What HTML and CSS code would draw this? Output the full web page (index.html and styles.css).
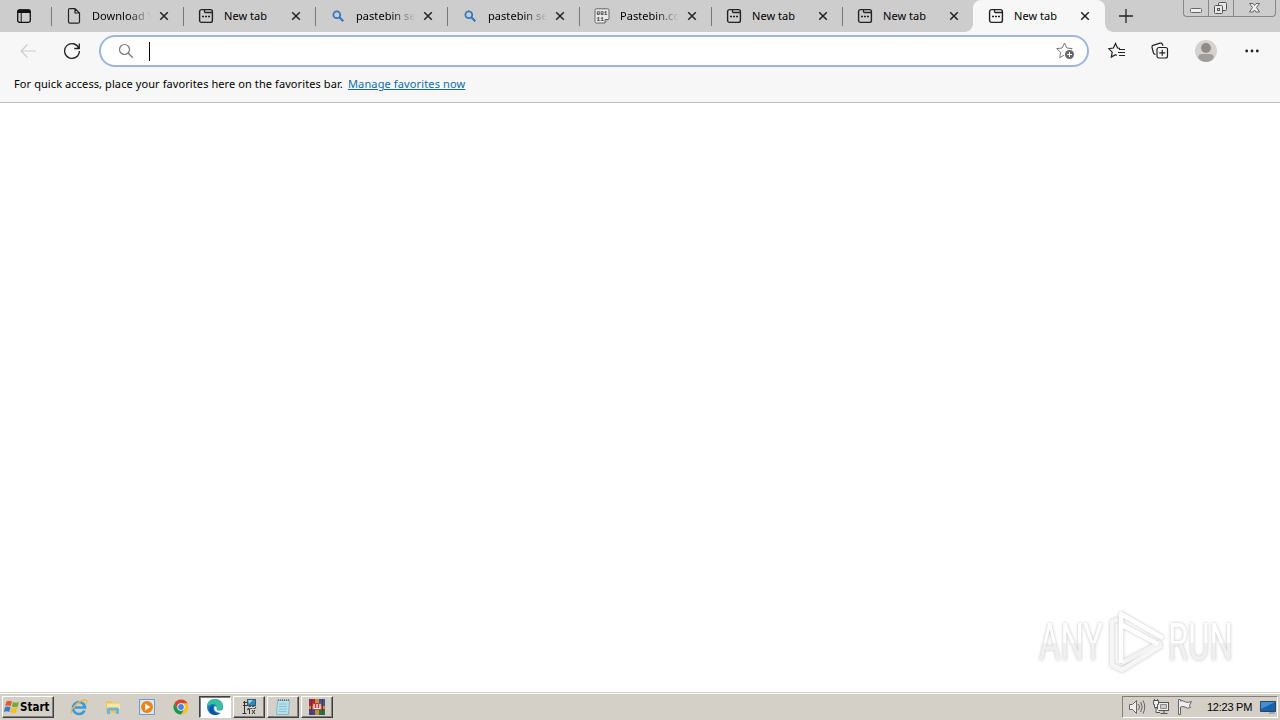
FILE: index.html
```
<!DOCTYPE html>
<html lang="en">
  <head>
    <meta charset="UTF-8" />
    <title>New tab</title>
    <link rel="stylesheet" href="styles.css" />
  </head>
  <body>
    <svg class="sprite">
      <symbol id="newtab" viewBox="0 0 16 16">
        <rect x="1.6" y="1.6" width="12.8" height="12.8" rx="2" fill="none" stroke="#222" stroke-width="1.4" />
        <path d="M6.5 2v1.2q0 1.3 1.3 1.3H14" fill="none" stroke="#222" stroke-width="1.3" />
        <path d="M4 8.500h2M7 8.500h2M10 8.500h2" stroke="#222" stroke-width="1.600" />
      </symbol>
      <symbol id="page" viewBox="0 0 16 16">
        <path d="M2.500 1.900q0-1.300 1.300-1.300H9L13.500 5v8.700q0 1.500-1.500 1.500H4q-1.500 0-1.500-1.500zM9 .8V5h4.300" fill="none" stroke="#222" stroke-width="1.200" />
      </symbol>
      <symbol id="search" viewBox="0 0 16 16">
        <circle cx="6.800" cy="6.800" r="3.400" fill="none" stroke="#3478bd" stroke-width="1.800" />
        <path d="M9.300 9.300l4 4" stroke="#3478bd" stroke-width="2.200" />
      </symbol>
      <symbol id="close" viewBox="0 0 10 10">
        <path d="M1.200 1.200l7.600 7.600M8.800 1.200L1.200 8.800" stroke="#222" stroke-width="1.500" />
      </symbol>
    </svg>

    <header class="tabstrip">
      <div class="tab-actions">
        <svg width="16" height="16" viewBox="0 0 16 16">
          <rect x="1.700" y="2" width="12.600" height="12.300" rx="1.800" fill="none" stroke="#111" stroke-width="1.300" />
          <path d="M1.500 3q0-1.500 1.500-1.500h10q1.500 0 1.500 1.500v2h-13z" fill="#111" />
          <path d="M5.200 5v9" stroke="#111" />
        </svg>
      </div>
      <div class="tab"><svg class="favicon"><use href="#page" /></svg><span class="title fade">Download V</span><svg class="close"><use href="#close" /></svg></div>
      <div class="tab"><svg class="favicon"><use href="#newtab" /></svg><span class="title">New tab</span><svg class="close"><use href="#close" /></svg></div>
      <div class="tab"><svg class="favicon"><use href="#search" /></svg><span class="title fade">pastebin se</span><svg class="close"><use href="#close" /></svg></div>
      <div class="tab"><svg class="favicon"><use href="#search" /></svg><span class="title fade">pastebin se</span><svg class="close"><use href="#close" /></svg></div>
      <div class="tab">
        <svg class="favicon paste" viewBox="0 0 16 16">
          <path d="M2.500.8h11q1.500 0 1.500 1.500v8.700L10.800 15H2.500Q1 15 1 13.500V2.300Q1 .8 2.500.8z" fill="#e8e8e8" stroke="#666" />
          <path d="M11 15v-3.500h4" fill="#bbb" stroke="#666" />
          <text x="2.600" y="7" font-size="6">001</text>
          <text x="2.600" y="13" font-size="6">11</text>
        </svg><span class="title fade">Pastebin.co</span><svg class="close"><use href="#close" /></svg>
      </div>
      <div class="tab narrow"><svg class="favicon"><use href="#newtab" /></svg><span class="title">New tab</span><svg class="close"><use href="#close" /></svg></div>
      <div class="tab narrow"><svg class="favicon"><use href="#newtab" /></svg><span class="title">New tab</span><svg class="close"><use href="#close" /></svg></div>
      <div class="tab active"><svg class="favicon"><use href="#newtab" /></svg><span class="title">New tab</span><svg class="close"><use href="#close" /></svg></div>
      <svg class="add-tab" width="14" height="14" viewBox="0 0 14 14"><path d="M7 0v14M0 7h14" stroke="#222" stroke-width="1.300" /></svg>
      <div class="window-buttons">
        <div><svg width="24" height="16"><rect x="6.500" y="8.500" width="11" height="4" rx="1" fill="#eee" stroke="#666" /></svg></div>
        <div><svg width="24" height="16" fill="#e8e8e8" stroke="#555"><rect x="9.500" y="2.500" width="8" height="8" rx="1" /><rect x="5.500" y="5.500" width="8" height="8" rx="1" /><rect x="8.500" y="8.500" width="2" height="2" /></svg></div>
        <div><svg width="40" height="16"><path d="M15.500 3.500h3.500l1.500 2 1.500-2h3.500l-3 4 3 4.500H22l-1.500-2-1.500 2h-3.500l3-4.500z" fill="#eee" stroke="#666" /></svg></div>
      </div>
    </header>

    <div class="toolbar">
      <svg class="back" width="18" height="16" viewBox="0 0 18 16"><path d="M17 8H2M8.500 1.500L2 8l6.500 6.500" fill="none" stroke="#ccc" stroke-width="1.200" /></svg>
      <svg class="reload" width="18" height="18" viewBox="0 0 18 18"><path d="M15.900 6.300A7.400 7.400 0 1 0 16.400 9M16.300 1.500v5h-5" fill="none" stroke="#222" stroke-width="1.300" /></svg>
      <div class="address">
        <svg width="16" height="16" viewBox="0 0 16 16"><circle cx="6.500" cy="6.500" r="5" fill="none" stroke="#777" stroke-width="1.200" /><path d="M10.200 10.200l4.600 4.600" stroke="#777" stroke-width="1.300" /></svg>
        <span class="caret"></span>
        <svg class="add-favorite" width="20" height="18" viewBox="0 0 20 18">
          <path d="M8.500 1l2.300 5 5.400.6-4 3.700 1 5.400-4.700-2.700L3.700 15.700l1-5.400-4-3.700 5.400-.6z" fill="none" stroke="#777" />
          <circle cx="13.500" cy="12.500" r="5.500" fill="#fff" /><circle cx="13.500" cy="12.500" r="4.500" fill="#666" />
          <path d="M13.500 10v5M11 12.500h5" stroke="#fff" />
        </svg>
      </div>
      <svg class="favorites" width="18" height="18" viewBox="0 0 18 18"><path d="M12 6.300l-2.500-.3L7.500 1.500 5.400 6l-4.700.7 3.500 3.400-.9 5 4.200-2.300 1.300.7M11 7.500h6M10 10.500h7M11 13.500h6" fill="none" stroke="#222" stroke-width="1.200" /></svg>
      <svg class="collections" width="18" height="18" viewBox="0 0 18 18" fill="none" stroke="#222" stroke-width="1.200"><path d="M4.500 12.500Q3 12.300 2.500 11L1 5.500Q.7 4 2 3.400L9 1.200q1.800-.4 2.400 1l.5 1.600" /><rect x="6" y="5.500" width="10.500" height="10.500" rx="2" /><path d="M11.250 7.800v6M8.250 10.800h6" /></svg>
      <svg class="profile" width="22" height="22" viewBox="0 0 22 22"><circle cx="11" cy="11" r="11" fill="#d4d1cf" /><circle cx="11" cy="8" r="5" fill="#8e8b89" /><path d="M3.200 18q0-4 4-4h7.600q4 0 4 4-3 4-7.800 4t-7.800-4z" fill="#a09d9b" /></svg>
      <svg class="more" width="14" height="4" viewBox="0 0 14 4" fill="#222"><circle cx="1.700" cy="2" r="1.400" /><circle cx="7" cy="2" r="1.400" /><circle cx="12.300" cy="2" r="1.400" /></svg>
    </div>

    <div class="favorites-bar">
      <span class="hint">For quick access, place your favorites here on the favorites bar.</span>
      <a class="manage" href="#">Manage favorites now</a>
    </div>

    <main class="content">
      <svg class="watermark" width="210" height="72" viewBox="0 0 210 72">
        <defs>
          <linearGradient id="shade" gradientUnits="userSpaceOnUse" x1="0" y1="18" x2="0" y2="56"><stop offset=".55" stop-color="#fff" /><stop offset=".55" stop-color="#f0f0f0" /></linearGradient>
        </defs>
        <g fill="url(#shade)">
          <text x="9" y="56" textLength="64" lengthAdjust="spacingAndGlyphs">ANY</text>
          <text x="138" y="56" textLength="65" lengthAdjust="spacingAndGlyphs">RUN</text>
        </g>
        <g fill="none" stroke-width="4.500" stroke-linejoin="round">
          <path d="M88 15l-6 3v43l10 5 40-25" stroke="#f6f6f6" />
          <path d="M92 59l39-21" stroke="#f3f3f3" />
          <path d="M91 59V10l42 24M92 21l36 19" stroke="#fff" />
        </g>
      </svg>
    </main>

    <footer class="taskbar">
      <button class="start">
        <svg width="16" height="16" viewBox="0 0 16 16"><path d="M2.500 2.500Q5 .8 8 2.500L6.800 7.200Q4 6 1.200 7.200z" fill="#e75b28" /><path d="M9 3q3 1.500 6-.2l-1.300 5Q10.800 9 7.800 7.600z" fill="#72aa32" /><path d="M1 8.200q3-1.200 5.600 0l-1.300 4.700Q2.500 11.500-.2 13z" fill="#377cc8" /><path d="M7.500 8.600q3 1.400 5.800.2L12 13.500q-3 1.300-5.800-.2z" fill="#f3bd25" /></svg>
        Start
      </button>
      <div class="quick">
        <svg width="18" height="18" viewBox="0 0 18 18"><path d="M14.500 12.500A6 6 0 1 1 15 9.500H5" fill="none" stroke="#399bd8" stroke-width="2.600" /><path d="M2 15Q-.5 15 3 10 9 2 15 2q3 0 1 4" fill="none" stroke="#e5b84b" stroke-width="1.300" /></svg>
        <svg width="18" height="18" viewBox="0 0 18 18"><path d="M2 3h5l1 1.500h7V15H2z" fill="#e9c65f" /><path d="M3 5.500h13v6H3z" fill="#f8e79f" /><path d="M3 16v-5q0-1.500 1.500-1.500h9q1.500 0 1.500 1.500v5h-3v-3.500H6V16z" fill="#72b4d8" /></svg>
        <svg width="18" height="18" viewBox="0 0 18 18"><rect x="1.500" y="1.500" width="15" height="15" fill="#d9e9f8" stroke="#6d9cce" /><circle cx="9" cy="9" r="6" fill="#ee8419" /><path d="M7.200 5.500l5 3.500-5 3.500z" fill="#fff" /></svg>
        <svg width="18" height="18" viewBox="0 0 18 18"><circle cx="9" cy="9" r="7.500" fill="#f5c02b" /><path d="M2.500 5.250A7.500 7.500 0 0 1 15.500 5.250H9L5.750 10.900z" fill="#db4437" /><path d="M2.500 5.250A7.500 7.500 0 0 0 9 16.500l3.250-5.600H5.750z" fill="#20934d" /><circle cx="9" cy="9" r="3.700" fill="#fff" /><circle cx="9" cy="9" r="2.900" fill="#4285e8" /></svg>
      </div>
      <div class="tasks">
        <div class="task pressed"><svg width="18" height="18" viewBox="0 0 18 18"><circle cx="9" cy="9" r="8" fill="#147dc4" /><path d="M1 8Q2 1 9 1q7.500.5 8 7 0 4-5 4-3-.5-1.500-2.500Q10.500 6 7 6 3 6 1 9.500z" fill="#35bf9f" /><path d="M7.500 8q-2 5 3 7.500 3 .5 5-1.500Q13 17.500 9 17 2 16 3.500 10 5 6.500 9 7.500z" fill="#1054a0" /><path d="M9 8q2 .5 1.500 2T12 12.500q3 .5 5-1.500l1 3-4 1Q8 14 8 9.500z" fill="#fff" /></svg></div>
        <div class="task"><svg width="18" height="18" viewBox="0 0 18 18"><path d="M3 4.500h4M4.500 3v13M2.500 15.500h4M3 7.500h4M9.500 11v5M7 12l3-1.500M12 12l3 4M15 12l-3 4" stroke="#333" /><rect x="7.500" y="1.500" width="8" height="6" fill="#2789c9" stroke="#456" /><path d="M8 2h5L9 6z" fill="#95d7ef" /><path d="M9 8.500h6l1 2H8z" fill="#ddd" stroke="#444" stroke-dasharray="2 1" /></svg></div>
        <div class="task"><svg width="18" height="18" viewBox="0 0 18 18"><path d="M3.500 2.500h12l-1 14h-12z" fill="#b5e1ed" stroke="#85b6c2" /><path d="M4 2h12" stroke="#667" stroke-width="1.500" stroke-dasharray="1 1" /><path d="M5 6h8M5 8.500h8M5 11h8M4.500 13.500h8" stroke="#8cc3d0" /></svg></div>
        <div class="task"><svg width="18" height="18" viewBox="0 0 18 18"><path d="M1 1h7v7H1z" fill="#a82740" /><path d="M10 1h7v7h-7z" fill="#3459a3" /><path d="M1 10h7v7H1z" fill="#3c458e" /><path d="M10 10h7v7h-7z" fill="#27764b" /><path d="M7 1h4v16H7zM1 8h16v3H1z" fill="#c69135" /><path d="M3.500 1v16M14.500 1v16" stroke="#6e3030" /><path d="M4.500 5h9v7h-9z" fill="#c33b3b" /><path d="M6 6v4.500h6V6M9 6v4" fill="none" stroke="#fff" stroke-width="1.200" /></svg></div>
      </div>
      <div class="tray">
        <svg width="18" height="18" viewBox="0 0 18 18" fill="#eee" stroke="#666"><path d="M1.500 6.500h3l4-4v13l-4-4h-3z" /><path d="M10.500 6q2 3 0 6M12.700 4q3 5 0 10M15 2.500q3.500 6.500 0 13" fill="none" /></svg>
        <svg width="18" height="18" viewBox="0 0 18 18" fill="#eee" stroke="#555"><rect x="5.500" y="4.500" width="11" height="8" /><path d="M8.500 15.500h7M12 12.500v3M1.500 2.500h5v4h-1v3h-3v-3h-1zM4 9.500v5h4M2.500 1v2M5.500 1v2" /><path d="M8.500 6.500h6v4h-6z" fill="#ccc" stroke="#888" /></svg>
        <svg width="18" height="18" viewBox="0 0 18 18"><path d="M2.500 1.500h2V3Q7 2 9.500 4q3 1 6-.5l-2 4 1 2Q11 11 9 9 7 8 4.500 9v7.500h-2z" fill="#eee" stroke="#666" /></svg>
        <span class="clock">12:23 PM</span>
        <svg width="16" height="15" viewBox="0 0 16 15"><path d="M.5 1.500h15v10H.5z" fill="#1762ac" stroke="#345" /><path d="M1 2h14L1 9z" fill="#3f91d3" /><path d="M9 13h6" stroke="#99a" stroke-width="1.500" /></svg>
      </div>
    </footer>
  </body>
</html>
```
FILE: styles.css
```
* {
  box-sizing: border-box;
}

body {
  margin: 0;
  height: 100vh;
  overflow: hidden;
  display: flex;
  flex-direction: column;
  background: #fff;
  color: #000;
  font-family: "Noto Sans", "Open Sans", sans-serif;
  font-size: 11px;
}

svg {
  display: block;
  flex: none;
}

.sprite {
  position: absolute;
  width: 0;
  height: 0;
}

/* tabs */
.tabstrip {
  display: flex;
  flex: none;
  height: 32px;
  background: #cdcdcd;
}

.tab-actions {
  width: 51px;
  padding: 8px 0 0 16px;
}

.tab {
  position: relative;
  display: flex;
  align-items: center;
  width: 132px;
  padding-left: 15px;
}

.tab.narrow {
  width: 131px;
}

.tab::before {
  content: "";
  position: absolute;
  left: 0;
  top: 7px;
  width: 1px;
  height: 19px;
  background: #777;
}

.favicon {
  width: 16px;
  height: 16px;
}

.paste text {
  font-family: "Liberation Mono", monospace;
  font-weight: bold;
  fill: #333;
}

.title {
  width: 59px;
  margin-left: 10px;
  padding-bottom: 2px;
  overflow: hidden;
  white-space: nowrap;
  font-size: 11px;
  letter-spacing: 0.05px;
}

.narrow .title,
.active .title {
  width: 58px;
}

.fade {
  -webkit-mask-image: linear-gradient(90deg, #000 60%, transparent);
  mask-image: linear-gradient(90deg, #000 60%, transparent);
}

.close {
  width: 10px;
  height: 10px;
  margin-left: 8px;
}

.tab.active {
  background: #f7f7f7;
  border-radius: 8px 8px 0 0;
}

.tab.active::before,
.tab.active::after {
  content: "";
  position: absolute;
  top: auto;
  bottom: 0;
  width: 8px;
  height: 8px;
}

.tab.active::before {
  left: -8px;
  background: radial-gradient(circle at 0 0, transparent 7.5px, #f7f7f7 8px);
}

.tab.active::after {
  left: auto;
  right: -8px;
  background: radial-gradient(circle at 100% 0, transparent 7.5px, #f7f7f7 8px);
}

.add-tab {
  margin: 9px 0 0 14px;
}

.window-buttons {
  display: flex;
  width: 93px;
  height: 17px;
  margin: 0 4px 0 auto;
  border: 1px solid #888;
  border-top: 0;
  border-radius: 0 0 4px 4px;
}

.window-buttons div + div {
  border-left: 1px solid #888;
}

/* toolbar */
.toolbar {
  display: flex;
  flex: none;
  align-items: center;
  height: 38px;
  background: #f7f7f7;
}

.back {
  margin-left: 19px;
}

.reload {
  margin-left: 26px;
}

.address {
  display: flex;
  align-items: center;
  width: 990px;
  height: 32px;
  margin-left: 18px;
  padding: 0 11px 0 17px;
  background: #fff;
  border: 2px solid #9db5de;
  border-radius: 16px;
}

.caret {
  width: 1px;
  height: 19px;
  margin-left: 15px;
  background: #000;
}

.add-favorite {
  margin-left: auto;
}

.favorites {
  margin-left: 19px;
}

.collections {
  margin-left: 25px;
}

.profile {
  margin-left: 26px;
}

.more {
  margin-left: 28px;
}

.favorites-bar {
  display: flex;
  flex: none;
  height: 33px;
  padding: 6px 14px 0;
  background: #f7f7f7;
  border-bottom: 1px solid #bdbdbd;
  line-height: 16px;
  white-space: nowrap;
}

.hint {
  width: 334px;
  letter-spacing: 0.09px;
}

.manage {
  color: #0f6ca8;
  letter-spacing: 0.13px;
}

/* page */
.content {
  display: flex;
  flex: 1;
  justify-content: flex-end;
  align-items: flex-end;
  padding: 0 40px 16px 0;
}

.watermark {
  filter: drop-shadow(0 0 1.5px rgba(0, 0, 0, 0.25));
}

.watermark text {
  font-family: Roboto, sans-serif;
  font-size: 51px;
}

/* taskbar */
.taskbar {
  display: flex;
  flex: none;
  align-items: flex-start;
  height: 28px;
  padding: 3px 2px 0;
  background: #d4d0c8;
  border-top: 1px solid #d4d0c8;
  box-shadow: inset 0 1px #fff;
}

.start,
.task {
  display: flex;
  align-items: center;
  height: 22px;
  background: #d4d0c8;
  border: 1px solid;
  border-color: #fff #404040 #404040 #fff;
  box-shadow: inset -1px -1px #808080;
}

.start {
  width: 52px;
  padding: 0 0 0 1px;
  gap: 0;
  font: bold 11.5px "DejaVu Sans Condensed", "DejaVu Sans", sans-serif;
}

.quick {
  display: flex;
  gap: 16px;
  margin-left: 16px;
  padding-top: 2px;
}

.tasks {
  display: flex;
  gap: 2px;
  margin-left: 9px;
}

.task {
  justify-content: center;
  width: 32px;
}

.task.pressed {
  background: #fff;
  border-color: #404040 #fff #fff #404040;
  box-shadow: inset 1px 1px #808080;
}

.tray {
  display: flex;
  align-items: center;
  width: 156px;
  height: 22px;
  margin-left: auto;
  padding-left: 5px;
  gap: 6px;
  border: 1px solid;
  border-color: #808080 #fff #fff #808080;
}

.clock {
  width: 47px;
  margin-left: 7px;
  font-family: "Liberation Sans", Arial, sans-serif;
  font-size: 11px;
  letter-spacing: -0.25px;
  white-space: nowrap;
}
```
